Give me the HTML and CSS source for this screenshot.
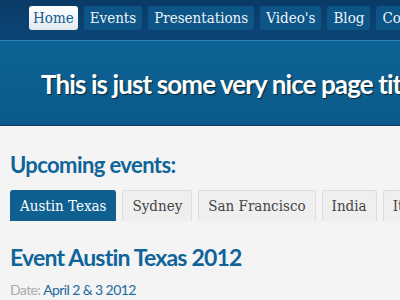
FILE: index.html
```html
<!DOCTYPE html>
<html lang="en">

<head>
    <meta charset="UTF-8">
    <meta name="viewport" content="width=device-width, initial-scale=1.0">
    <title>Events</title>

    <link rel="stylesheet" href="styles.css">

</head>

<body>

    <div class="topnav">
        <a href="#" class="active"> Home </a>
        <a href="#"> Events </a>
        <a href="#"> Presentations </a>
        <a href="#"> Video's </a>
        <a href="#"> Blog </a>
        <a href="#"> Contact </a>
    </div>

    <div class="banner">
        <h1> This is just some very nice page title </h1>
    </div>

    <div class="content">
        <h2> Upcoming events: </h2>

        <div class="tabs">
            <a href="#" class="active"> Austin Texas </a>
            <a href="#"> Sydney </a>
            <a href="#"> San Francisco </a>
            <a href="#"> India </a>
            <a href="#"> Italy </a>
        </div>

        <h3> Event Austin Texas 2012 </h3>
        <p class="date"><span class="label">Date:</span>April 2 &amp; 3 2012</p>
    </div>

</body>

</html>
```

FILE: styles.css
```css
body {
    margin: 0;
    background-color: #f4f4f4;
    font-family: "Lato", sans-serif;
    overflow: hidden;
}

.topnav {
    display: flex;
    gap: 6px;
    height: 41px;
    box-sizing: border-box;
    padding: 6px 0 0 29px;
    background: linear-gradient(#0a3a66, #0b4677);
    border-bottom: 1px solid #2b85bd;
    white-space: nowrap;
}

.topnav a {
    display: block;
    height: 24px;
    line-height: 24px;
    padding: 0 6px;
    border-radius: 3px;
    background-color: #0d5587;
    color: #eef4f9;
    text-decoration: none;
    font-family: "DejaVu Serif Condensed", "DejaVu Serif", serif;
    font-size: 15px;
}

.topnav a.active {
    padding: 0 4px;
    background: linear-gradient(#ffffff, #e4e9ee);
    color: #135d91;
}

.banner {
    height: 85px;
    box-sizing: border-box;
    padding-left: 41px;
    display: flex;
    align-items: center;
    background: linear-gradient(#0d6395, #0b5a8a);
    border-bottom: 1px solid #0a3e66;
    white-space: nowrap;
}

.banner h1 {
    margin: 2px 0 0 0;
    color: white;
    font-size: 26px;
    letter-spacing: -0.9px;
    text-shadow: 1px 1px 1px rgba(0, 0, 0, 0.6);
}

.content {
    padding: 25px 10px 0 10px;
}

.content h2 {
    margin: 0;
    color: #0f6499;
    font-size: 22px;
    letter-spacing: -0.6px;
}

.tabs {
    display: flex;
    gap: 6px;
    margin-top: 12px;
    white-space: nowrap;
}

.tabs a {
    display: block;
    height: 30px;
    line-height: 30px;
    padding: 0 9px;
    border: 1px solid #dcdcdc;
    border-bottom: none;
    border-radius: 3px 3px 0 0;
    background-color: #efefef;
    color: #444;
    text-decoration: none;
    font-family: "DejaVu Serif Condensed", "DejaVu Serif", serif;
    font-size: 15px;
}

.tabs a.active {
    background-color: #0e6090;
    border-color: #0e6090;
    color: white;
}

.content h3 {
    margin: 22px 0 0 0;
    color: #0f6499;
    font-size: 23px;
    letter-spacing: -0.8px;
}

.date {
    margin: 10px 0 0 0;
    color: #1a6a9e;
    font-size: 14px;
    letter-spacing: -0.6px;
}

.date .label {
    margin-right: 3px;
    color: #aaaaaa;
}
```
